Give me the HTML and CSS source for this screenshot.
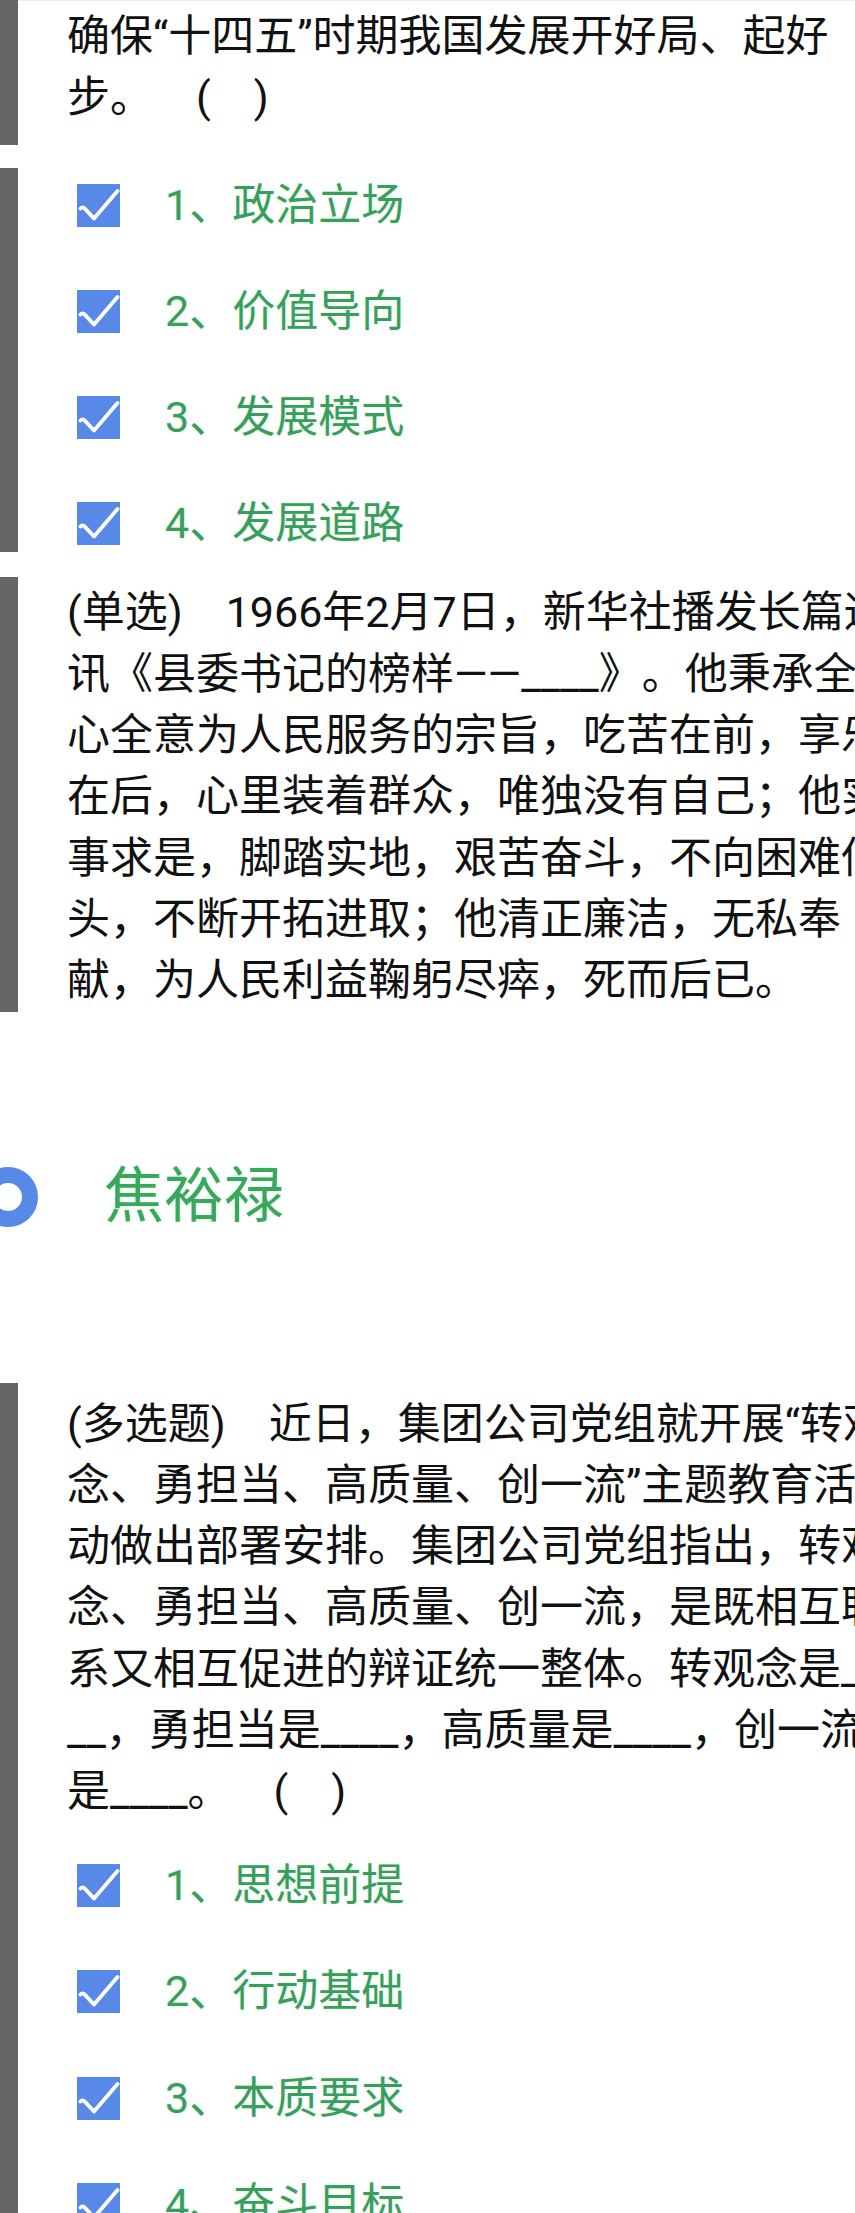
FILE: index.html
```html
<!DOCTYPE html>
<html lang="zh-CN">
<head>
<meta charset="utf-8">
<title>答题</title>
<link rel="stylesheet" href="styles.css">
</head>
<body>
<div class="page">
  <section class="block q1">
    <p class="qtext">确保“十四五”时期我国发展开好局、起好<br>步。　(　)</p>
  </section>

  <section class="block opts">
    <ul class="optlist">
      <li class="opt"><svg class="check" viewBox="0 0 43 43"><rect width="43" height="43" fill="#5888e8"/><path d="M3.5 24.5 Q5.5 22.3 7.8 24.6 L17 34.5 L40.5 7" fill="none" stroke="#fff" stroke-width="3.8" stroke-linecap="round" stroke-linejoin="round"/></svg><span class="opt-label">1、政治立场</span></li>
      <li class="opt"><svg class="check" viewBox="0 0 43 43"><rect width="43" height="43" fill="#5888e8"/><path d="M3.5 24.5 Q5.5 22.3 7.8 24.6 L17 34.5 L40.5 7" fill="none" stroke="#fff" stroke-width="3.8" stroke-linecap="round" stroke-linejoin="round"/></svg><span class="opt-label">2、价值导向</span></li>
      <li class="opt"><svg class="check" viewBox="0 0 43 43"><rect width="43" height="43" fill="#5888e8"/><path d="M3.5 24.5 Q5.5 22.3 7.8 24.6 L17 34.5 L40.5 7" fill="none" stroke="#fff" stroke-width="3.8" stroke-linecap="round" stroke-linejoin="round"/></svg><span class="opt-label">3、发展模式</span></li>
      <li class="opt"><svg class="check" viewBox="0 0 43 43"><rect width="43" height="43" fill="#5888e8"/><path d="M3.5 24.5 Q5.5 22.3 7.8 24.6 L17 34.5 L40.5 7" fill="none" stroke="#fff" stroke-width="3.8" stroke-linecap="round" stroke-linejoin="round"/></svg><span class="opt-label">4、发展道路</span></li>
    </ul>
  </section>

  <section class="block q2">
    <p class="qtext">(单选)　1966年2月7日，新华社播发长篇通<br>讯《县委书记的榜样——____》。他秉承全<br>心全意为人民服务的宗旨，吃苦在前，享乐<br>在后，心里装着群众，唯独没有自己；他实<br>事求是，脚踏实地，艰苦奋斗，不向困难低<br>头，不断开拓进取；他清正廉洁，无私奉<br>献，为人民利益鞠躬尽瘁，死而后已。</p>
  </section>

  <div class="answer">
    <span class="ring"></span>
    <span class="answer-text">焦裕禄</span>
  </div>

  <section class="block q3">
    <p class="qtext">(多选题)　近日，集团公司党组就开展“转观<br>念、勇担当、高质量、创一流”主题教育活<br>动做出部署安排。集团公司党组指出，转观<br>念、勇担当、高质量、创一流，是既相互联<br>系又相互促进的辩证统一整体。转观念是____<br>__，勇担当是____，高质量是____，创一流<br>是____。　(　)</p>
    <ul class="optlist">
      <li class="opt"><svg class="check" viewBox="0 0 43 43"><rect width="43" height="43" fill="#5888e8"/><path d="M3.5 24.5 Q5.5 22.3 7.8 24.6 L17 34.5 L40.5 7" fill="none" stroke="#fff" stroke-width="3.8" stroke-linecap="round" stroke-linejoin="round"/></svg><span class="opt-label">1、思想前提</span></li>
      <li class="opt"><svg class="check" viewBox="0 0 43 43"><rect width="43" height="43" fill="#5888e8"/><path d="M3.5 24.5 Q5.5 22.3 7.8 24.6 L17 34.5 L40.5 7" fill="none" stroke="#fff" stroke-width="3.8" stroke-linecap="round" stroke-linejoin="round"/></svg><span class="opt-label">2、行动基础</span></li>
      <li class="opt"><svg class="check" viewBox="0 0 43 43"><rect width="43" height="43" fill="#5888e8"/><path d="M3.5 24.5 Q5.5 22.3 7.8 24.6 L17 34.5 L40.5 7" fill="none" stroke="#fff" stroke-width="3.8" stroke-linecap="round" stroke-linejoin="round"/></svg><span class="opt-label">3、本质要求</span></li>
      <li class="opt"><svg class="check" viewBox="0 0 43 43"><rect width="43" height="43" fill="#5888e8"/><path d="M3.5 24.5 Q5.5 22.3 7.8 24.6 L17 34.5 L40.5 7" fill="none" stroke="#fff" stroke-width="3.8" stroke-linecap="round" stroke-linejoin="round"/></svg><span class="opt-label">4、奋斗目标</span></li>
    </ul>
  </section>
</div>
</body>
</html>
```

FILE: styles.css
```css
html, body {
  margin: 0;
  height: 2213px;
  overflow: hidden;
  background: #fff;
}

body {
  font-family: "Roboto", "Noto Sans CJK SC", sans-serif;
  color: #111;
  text-spacing-trim: space-all;
}

.page {
  width: 855px;
  overflow: hidden;
}

.block {
  border-left: 18px solid #666;
  padding-left: 49px;
  overflow: hidden;
}

.qtext {
  margin: 0;
  font-size: 43px;
  line-height: 61.3px;
  white-space: nowrap;
}

.q1 {
  padding-top: 6px;
  padding-bottom: 16px;
  box-shadow: inset 0 1px 0 #ececec;
}

.opts {
  margin-top: 23px;
  padding-top: 16px;
  padding-bottom: 7px;
}

.optlist {
  list-style: none;
  margin: 0;
  padding: 0 0 0 10px;
  display: flex;
  flex-direction: column;
  gap: 63.3px;
}

.opt {
  display: flex;
  align-items: center;
  height: 43px;
}

.check {
  width: 43px;
  height: 43px;
  flex: none;
  display: block;
}

.opt-label {
  margin-left: 45px;
  font-size: 43px;
  line-height: 43px;
  color: #3a9d5d;
  white-space: nowrap;
  text-shadow: 0 0 3px rgba(120, 220, 140, 0.35);
}

.q2 {
  margin-top: 25px;
  padding-top: 5px;
}

.answer {
  display: flex;
  align-items: center;
  height: 60px;
  margin: 155px 0 156px;
}

.ring {
  width: 60px;
  height: 60px;
  box-sizing: border-box;
  border: 16px solid #5888e8;
  border-radius: 50%;
  margin-left: -22px;
  flex: none;
}

.answer-text {
  margin-left: 66px;
  font-size: 60px;
  line-height: 60px;
  color: #3aa85c;
  text-shadow: 0 0 3px rgba(120, 220, 140, 0.35);
}

.q3 {
  padding-top: 11px;
  padding-bottom: 200px;
}

.q3 .optlist {
  margin-top: 41.5px;
}
```
